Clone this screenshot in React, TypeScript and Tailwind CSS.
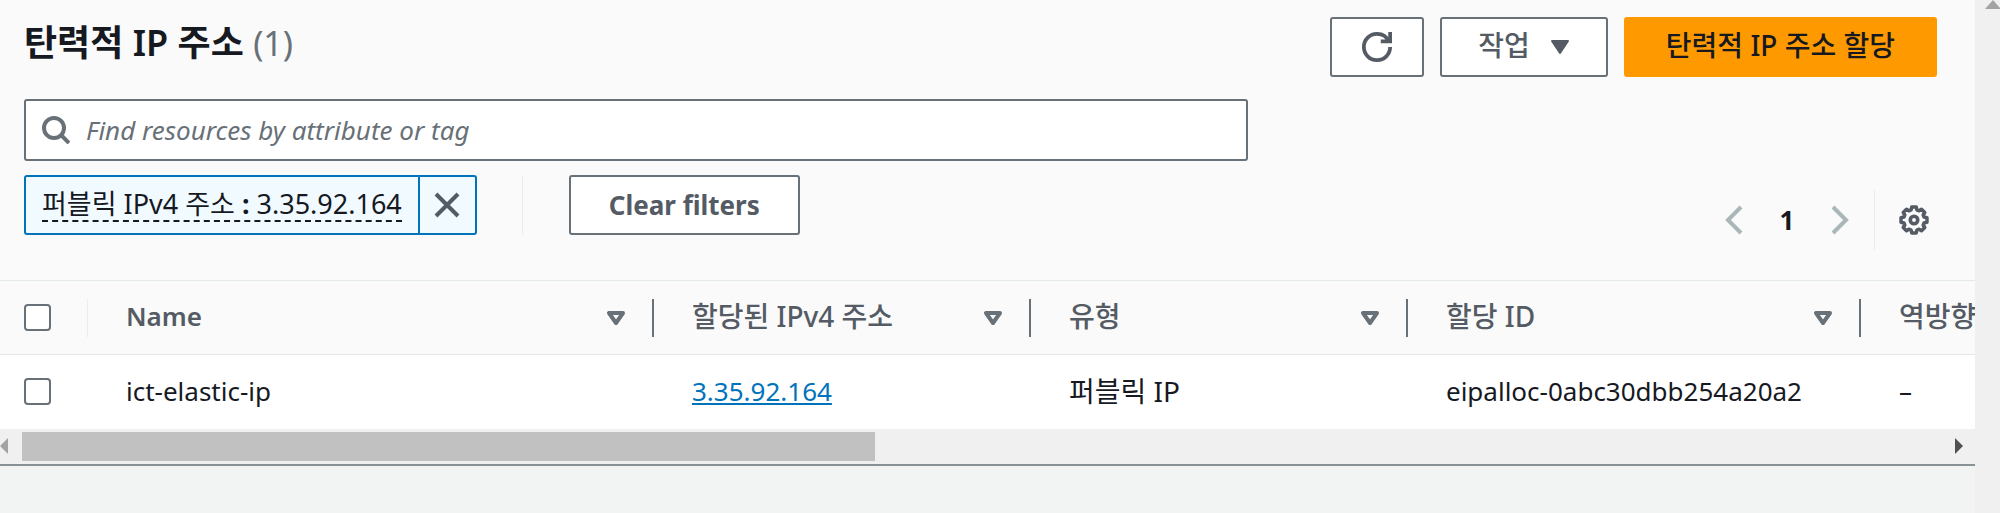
const columns = [
  { label: 'Name', width: 'w-[566px]', text: 'text-[26px] font-semibold' },
  { label: '할당된 IPv4 주소', width: 'w-[377px]', text: 'text-[28px] font-medium' },
  { label: '유형', width: 'w-[377px]', text: 'text-[28px] font-medium' },
  { label: '할당 ID', width: 'w-[453px]', text: 'text-[28px] font-medium' },
  { label: '역방향', width: '', text: 'text-[28px] font-medium' },
]

const addresses = [
  { name: 'ict-elastic-ip', ip: '3.35.92.164', type: '퍼블릭 IP', allocationId: 'eipalloc-0abc30dbb254a20a2', reverse: '–' },
]

const buttonBase = 'flex h-[60px] items-center justify-center rounded-[3px] border-2 whitespace-nowrap'
const buttonNormal = `${buttonBase} border-[#687078] bg-white text-[#545b64]`

function RefreshIcon() {
  return (
    <svg viewBox="0 0 16 16" className="size-[30px]" fill="none" stroke="currentColor" strokeWidth="2" aria-hidden="true">
      <path d="M10 5h5V0" />
      <path d="M15 8a6.957 6.957 0 0 1-7 7 6.957 6.957 0 0 1-7-7 6.957 6.957 0 0 1 7-7 6.87 6.87 0 0 1 6.3 4" />
    </svg>
  )
}

function SearchIcon() {
  return (
    <svg viewBox="0 0 28 28" className="size-7 flex-shrink-0 text-[#687078]" fill="none" stroke="currentColor" strokeWidth="4" aria-hidden="true">
      <circle cx="12" cy="12" r="10" />
      <path d="m19 19 8 8" />
    </svg>
  )
}

function GearIcon() {
  return (
    <svg viewBox="0 0 16 16" className="size-[30px]" fill="none" stroke="currentColor" strokeWidth="1.9" strokeLinejoin="round" aria-hidden="true">
      <path d="M6.8 1.1h2.4l.34 1.52 1.17.48L12 2.27 13.73 4l-.83 1.29.48 1.17 1.52.34v2.4l-1.52.34-.48 1.17.83 1.29L12 13.73l-1.29-.83-1.17.48-.34 1.52H6.8l-.34-1.52-1.17-.48L4 13.73 2.27 12l.83-1.29-.48-1.17L1.1 9.2V6.8l1.52-.34.48-1.17L2.27 4 4 2.27l1.29.83 1.17-.48z" />
      <circle cx="8" cy="8" r="2" />
    </svg>
  )
}

function Header() {
  return (
    <header className="flex items-start justify-between pt-[17px]">
      <h2 className="text-[36px] leading-[52px] font-semibold text-[#16191f]">
        탄력적 IP 주소 <span className="text-[34px] font-normal text-[#687078]">(1)</span>
      </h2>
      <div className="flex gap-4">
        <button type="button" aria-label="새로 고침" className={`${buttonNormal} w-[94px]`}>
          <RefreshIcon />
        </button>
        <button type="button" className={`${buttonNormal} gap-5 px-9 text-[28px] font-medium`}>
          <span className="pb-1">작업</span>
          <svg viewBox="0 0 20 16" className="h-4 w-5" fill="currentColor" stroke="currentColor" strokeWidth="2" strokeLinejoin="round" aria-hidden="true">
            <path d="M2 2h16l-8 12z" />
          </svg>
        </button>
        <button type="button" className={`${buttonBase} border-[#ff9900] bg-[#ff9900] px-10 text-[28px] font-medium text-[#16191f]`}>
          <span className="pb-1">탄력적 IP 주소 할당</span>
        </button>
      </div>
    </header>
  )
}

function Filters() {
  return (
    <div className="flex items-end justify-between">
      <div className="w-[64%] pt-[22px] pb-[15px]">
        <label className="flex h-[62px] items-center gap-4 rounded-[3px] border-2 border-[#687078] bg-white px-4">
          <SearchIcon />
          <input
            type="text"
            aria-label="Find resources by attribute or tag"
            placeholder="Find resources by attribute or tag"
            className="min-w-0 flex-1 outline-none placeholder:italic placeholder:text-[#687078]"
          />
        </label>
        <div className="mt-[14px] flex items-center">
          <div className="flex h-[60px] rounded-[3px] border-2 border-[#0073bb] bg-[#f1faff] text-[#16191f]">
            <div className="flex items-center px-4">
              <button type="button" className="border-b-2 border-dashed border-[#16191f] text-[27px] leading-8">
                퍼블릭 IPv4 주소 <b>:</b> 3.35.92.164
              </button>
            </div>
            <button type="button" aria-label="필터 제거" className="flex w-[57px] items-center justify-center border-l-2 border-[#0073bb] text-[#545b64]">
              <svg viewBox="0 0 26 26" className="size-[26px]" fill="none" stroke="currentColor" strokeWidth="4" aria-hidden="true">
                <path d="m2 2 22 22M24 2 2 24" />
              </svg>
            </button>
          </div>
          <div className="ml-[45px] h-[60px] w-px bg-[#eaeded]" />
          <button type="button" className={`${buttonNormal} ml-[46px] px-[38px] font-bold`}>
            Clear filters
          </button>
        </div>
      </div>

      <div className="flex h-[60px] items-center">
        <button type="button" aria-label="이전 페이지" className="text-[#aab7b8]">
          <svg viewBox="0 0 18 30" className="h-[30px] w-[18px]" fill="none" stroke="currentColor" strokeWidth="4" aria-hidden="true">
            <path d="M16 2 3 15l13 13" />
          </svg>
        </button>
        <button type="button" aria-current="page" className="w-[88px] text-center font-bold text-[#16191f]">
          1
        </button>
        <button type="button" aria-label="다음 페이지" className="text-[#aab7b8]">
          <svg viewBox="0 0 18 30" className="h-[30px] w-[18px]" fill="none" stroke="currentColor" strokeWidth="4" aria-hidden="true">
            <path d="m2 2 13 13L2 28" />
          </svg>
        </button>
        <div className="ml-[25px] h-[60px] w-px bg-[#eaeded]" />
        <button type="button" aria-label="설정" className="mr-2 ml-6 text-[#545b64]">
          <GearIcon />
        </button>
      </div>
    </div>
  )
}

function Checkbox({ label }: { label: string }) {
  return (
    <input
      type="checkbox"
      aria-label={label}
      className="block size-[27px] appearance-none rounded-[4px] border-2 border-[#687078] bg-white checked:bg-[#0073bb]"
    />
  )
}

function AddressTable() {
  return (
    <div className="overflow-hidden">
      <table className="w-full table-fixed border-collapse text-left whitespace-nowrap">
        <thead>
          <tr className="h-[74px] border-y border-[#e3e9e9] bg-[#fafafa] text-[#545b64]">
            <th className="w-[88px] p-0">
              <div className="flex h-[38px] items-center border-r border-[#eaeded] pl-6">
                <Checkbox label="모두 선택" />
              </div>
            </th>
            {columns.map((column) => (
              <th key={column.label} scope="col" className={`p-0 ${column.width} ${column.text}`}>
                <div className={`flex h-[38px] items-center justify-between pr-[26px] pl-[38px] ${column.width ? 'border-r-2 border-[#687078]' : ''}`}>
                  <span className="pb-1">{column.label}</span>
                  {column.width && (
                    <button type="button" aria-label={`${column.label} 정렬`} className="text-[#687078]">
                      <svg viewBox="0 0 20 16" className="h-4 w-5" fill="none" stroke="currentColor" strokeWidth="4" strokeLinejoin="round" aria-hidden="true">
                        <path d="M3 3h14l-7 10z" />
                      </svg>
                    </button>
                  )}
                </div>
              </th>
            ))}
          </tr>
        </thead>
        <tbody>
          {addresses.map((address) => (
            <tr key={address.allocationId} className="h-[74px] bg-white text-[#16191f]">
              <td className="p-0 pl-6">
                <Checkbox label={`${address.name} 선택`} />
              </td>
              <td className="p-0 pb-[2px] pl-[38px]">{address.name}</td>
              <td className="p-0 pb-[2px] pl-[38px]">
                <a href="#" className="text-[#0073bb] underline">{address.ip}</a>
              </td>
              <td className="p-0 pb-[2px] pl-[38px] text-[28px]">{address.type}</td>
              <td className="p-0 pb-[2px] pl-[38px]">{address.allocationId}</td>
              <td className="p-0 pb-[2px] pl-[38px]">{address.reverse}</td>
            </tr>
          ))}
        </tbody>
      </table>
    </div>
  )
}

function HorizontalScrollbar() {
  return (
    <div className="flex h-[35px] items-center bg-[#f0f0f0]">
      <svg viewBox="0 0 8 16" className="h-4 w-2" fill="#a3a3a3" aria-hidden="true">
        <path d="M8 0v16L0 8z" />
      </svg>
      <div className="mx-[14px] flex-1">
        <div className="h-[29px] w-4/9 bg-[#c1c1c1]" />
      </div>
      <svg viewBox="0 0 8 16" className="mr-3 h-4 w-2" fill="#505050" aria-hidden="true">
        <path d="M0 0v16l8-8z" />
      </svg>
    </div>
  )
}

export default function App() {
  return (
    <div className="flex min-h-screen bg-[#f2f3f3] font-['Noto_Sans','Noto_Sans_CJK_KR',sans-serif] text-[26px] leading-9">
      <main className="min-w-0 flex-1">
        <section className="border-b-2 border-[#879196]">
          <div className="bg-[#fafafa] pr-[38px] pb-[30px] pl-6">
            <Header />
            <Filters />
          </div>
          <AddressTable />
          <HorizontalScrollbar />
        </section>
      </main>
      <div className="flex w-[25px] justify-end bg-[#f0f0f0]">
        <svg viewBox="0 0 15 9" className="h-[9px] w-[15px]" fill="#a3a3a3" aria-hidden="true">
          <path d="M0 9h15v-1L8 0z" />
        </svg>
      </div>
    </div>
  )
}
